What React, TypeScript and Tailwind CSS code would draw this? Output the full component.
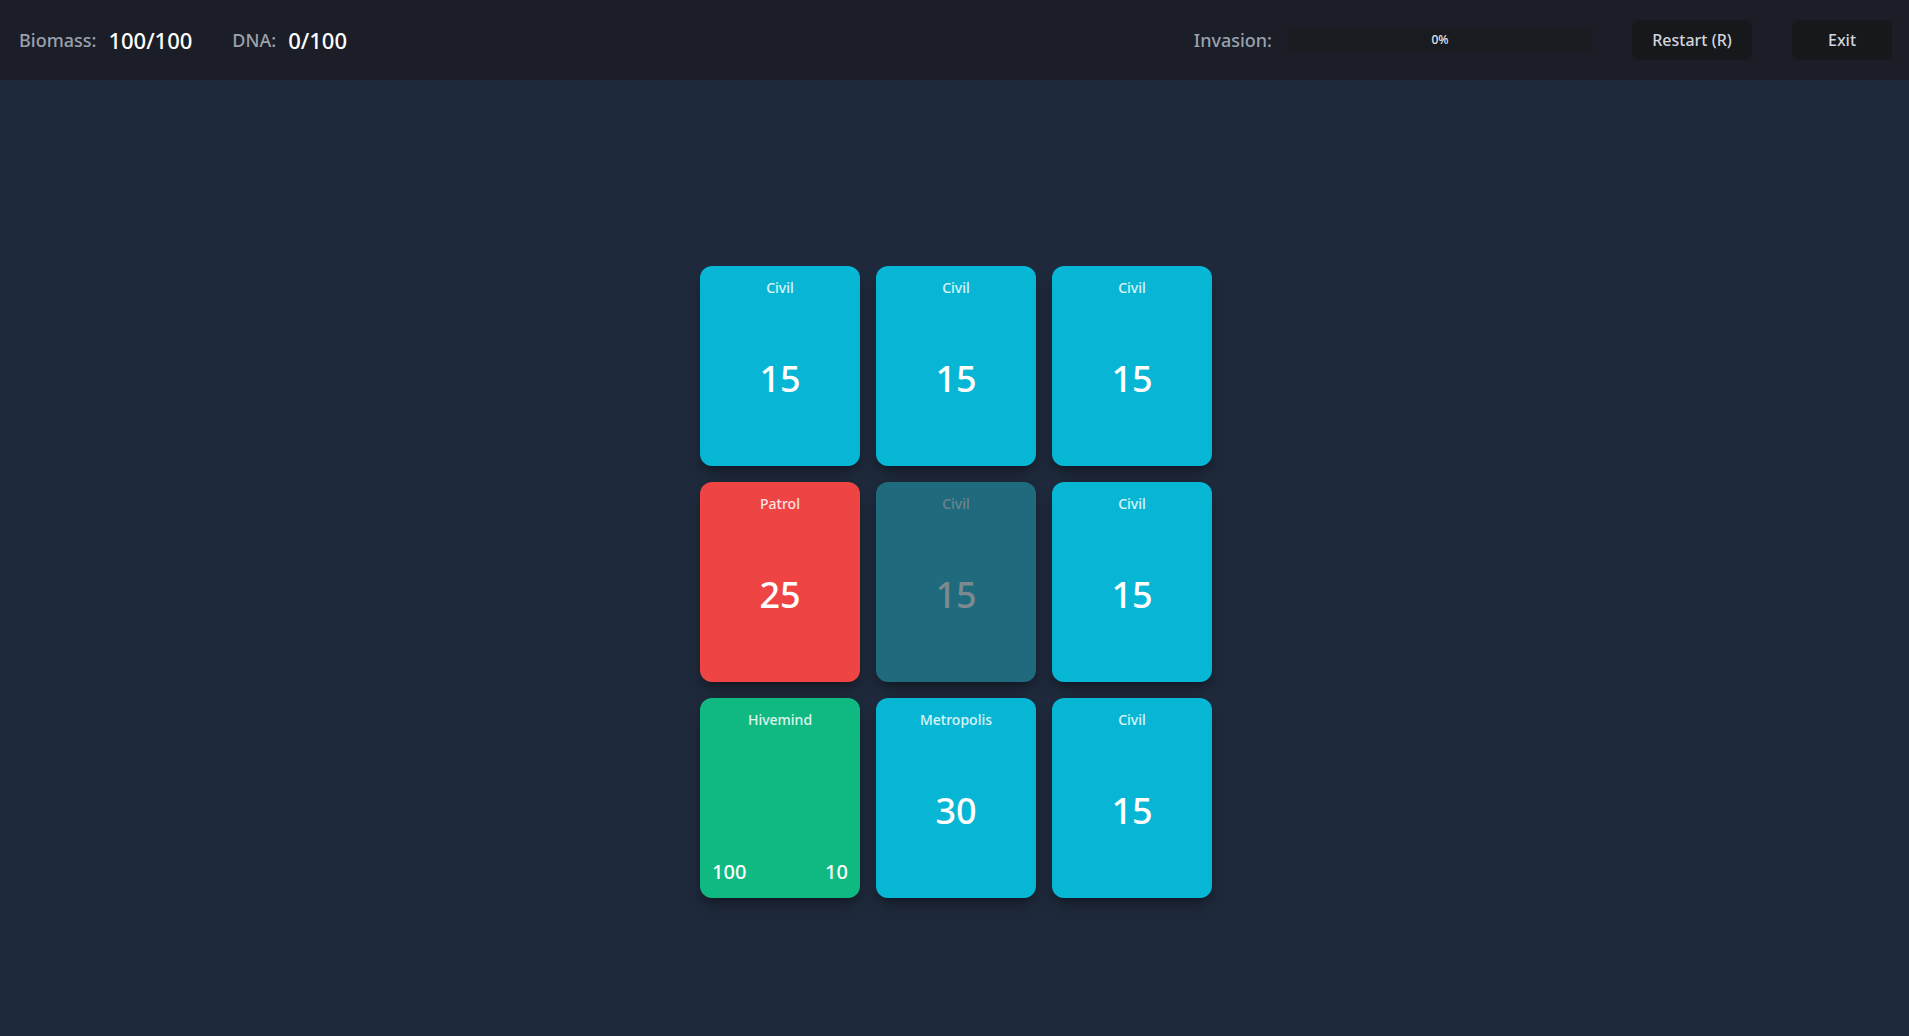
import React from 'react';

type Tile = {
  label: string;
  value?: number;
  kind: 'civil' | 'patrol' | 'hive' | 'spent';
  biomass?: number;
  dna?: number;
};

const tiles: Tile[] = [
  { label: 'Civil', value: 15, kind: 'civil' },
  { label: 'Civil', value: 15, kind: 'civil' },
  { label: 'Civil', value: 15, kind: 'civil' },
  { label: 'Patrol', value: 25, kind: 'patrol' },
  { label: 'Civil', value: 15, kind: 'spent' },
  { label: 'Civil', value: 15, kind: 'civil' },
  { label: 'Hivemind', kind: 'hive', biomass: 100, dna: 10 },
  { label: 'Metropolis', value: 30, kind: 'civil' },
  { label: 'Civil', value: 15, kind: 'civil' },
];

const kindClass: Record<Tile['kind'], string> = {
  civil: 'bg-[#06b6d4] text-white',
  patrol: 'bg-[#ef4444] text-white',
  hive: 'bg-[#10b981] text-white',
  spent: 'bg-[#1f6b7d] text-[#7c8a90]',
};

function Card({ tile }: { tile: Tile }) {
  const labelColor = tile.kind === 'spent' ? 'text-[#6f848c]' : 'text-white/85';
  return (
    <div className={`w-[160px] h-[200px] rounded-xl shadow-lg shadow-black/30 p-3 flex flex-col ${kindClass[tile.kind]}`}>
      <div className={`text-sm font-medium text-center leading-5 ${labelColor}`}>{tile.label}</div>
      {tile.kind === 'hive' ? (
        <>
          <div className="flex-1" />
          <div className="flex justify-between text-xl font-medium leading-7">
            <span>{tile.biomass}</span>
            <span>{tile.dna}</span>
          </div>
        </>
      ) : (
        <div className="flex-1 flex items-center justify-center pt-1.5 text-4xl font-medium leading-10">
          {tile.value}
        </div>
      )}
    </div>
  );
}

export default function App() {
  return (
    <div className="min-h-screen bg-[#1e293b] flex flex-col" style={{ fontFamily: '"Noto Sans", "Open Sans", sans-serif' }}>
      {/* Top bar */}
      <header className="h-20 bg-[#1b1e26] pl-[19px] pr-[17px] flex items-center justify-between">
        <div className="flex items-center gap-10">
          <div className="flex items-center gap-3">
            <span className="text-lg font-medium text-gray-400">Biomass:</span>
            <span className="text-[22px] font-medium text-white">100/100</span>
          </div>
          <div className="flex items-center gap-3">
            <span className="text-lg font-medium text-gray-400">DNA:</span>
            <span className="text-[22px] font-medium text-white">0/100</span>
          </div>
        </div>
        <div className="flex items-center gap-10">
          <div className="flex items-center gap-4">
            <span className="text-lg font-medium text-gray-400">Invasion:</span>
            <div className="w-[304px] h-6 rounded bg-[#181b20] flex items-center justify-center text-xs font-medium text-gray-200">
              0%
            </div>
          </div>
          <button className="w-[120px] h-10 rounded-md bg-[#16181c] text-base font-medium text-gray-300">
            Restart (R)
          </button>
          <button className="w-[100px] h-10 rounded-md bg-[#16181c] text-base font-medium text-gray-300">
            Exit
          </button>
        </div>
      </header>

      {/* Board */}
      <main className="flex-1 flex justify-center pt-[186px] pl-[3px]">
        <div className="grid grid-cols-3 gap-4 h-fit">
          {tiles.map((t, i) => (
            <Card key={i} tile={t} />
          ))}
        </div>
      </main>
    </div>
  );
}
